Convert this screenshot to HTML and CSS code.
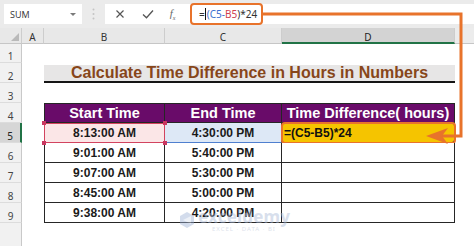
FILE: index.html
```html
<!DOCTYPE html>
<html>
<head>
<meta charset="utf-8">
<link rel="stylesheet" href="styles.css">
</head>
<body>
<div class="app">
  <div class="toolbar">
    <div class="namebox"><span>SUM</span><span class="caret"></span></div>
    <div class="grip">
      <svg width="3" height="12" viewBox="0 0 3 12"><circle cx="1.5" cy="1.5" r="1" fill="#c4c4c4"/><circle cx="1.5" cy="6" r="1" fill="#c4c4c4"/><circle cx="1.5" cy="10.5" r="1" fill="#c4c4c4"/></svg>
    </div>
    <div class="fbar">
      <span class="btn b1"><svg width="10" height="10" viewBox="0 0 10 10"><path d="M1.5 1.5 L8.5 8.5 M8.5 1.5 L1.5 8.5" stroke="#555" stroke-width="1.2" fill="none"/></svg></span>
      <span class="btn b2"><svg width="12" height="10" viewBox="0 0 12 10"><path d="M1 5.5 L4.5 8.8 L11 1.5" stroke="#555" stroke-width="1.3" fill="none"/></svg></span>
      <span class="btn b3"><span class="fx">f<sub>x</sub></span></span>
      <div class="formula"><span>=</span><span class="cursor"></span><span class="ref-blue">(C5-</span><span class="ref-red">B5</span><span>)*24</span></div>
    </div>
  </div>

  <div class="sheet">
    <div class="corner"><svg width="8" height="8" viewBox="0 0 8 8"><path d="M8 0 L8 8 L0 8 Z" fill="#b9b9b9"/></svg></div>
    <div class="colhead">A</div>
    <div class="colhead">B</div>
    <div class="colhead">C</div>
    <div class="colhead sel">D</div>
    <div class="colhead last"></div>

    <div class="rowhead">1</div><div class="blank span5"></div>

    <div class="rowhead">2</div><div class="blank"></div>
    <div class="title">Calculate Time Difference in Hours in Numbers</div>
    <div class="blank"></div>

    <div class="rowhead">3</div><div class="blank span5"></div>

    <div class="rowhead">4</div><div class="blank"></div>
    <div class="th first">Start Time</div>
    <div class="th">End Time</div>
    <div class="th">Time Difference( hours)</div>
    <div class="blank"></div>

    <div class="rowhead sel">5</div><div class="blank"></div>
    <div class="td first refb">8:13:00 AM<span class="h tl"></span><span class="h tr"></span><span class="h bl"></span><span class="h br"></span></div>
    <div class="td refc">4:30:00 PM</div>
    <div class="td active">=(C5-B5)*24</div>
    <div class="blank"></div>

    <div class="rowhead">6</div><div class="blank"></div>
    <div class="td first">9:01:00 AM</div><div class="td">5:40:00 PM</div><div class="td"></div><div class="blank"></div>

    <div class="rowhead">7</div><div class="blank"></div>
    <div class="td first">9:07:00 AM</div><div class="td">5:30:00 PM</div><div class="td"></div><div class="blank"></div>

    <div class="rowhead">8</div><div class="blank"></div>
    <div class="td first">8:45:00 AM</div><div class="td">5:00:00 PM</div><div class="td"></div><div class="blank"></div>

    <div class="rowhead">9</div><div class="blank"></div>
    <div class="td first">9:38:00 AM</div><div class="td">4:20:00 PM</div><div class="td"></div><div class="blank"></div>

    <div class="rowhead rest"></div><div class="blank span5"></div>
  </div>

  <div class="watermark">
    <svg class="wm-logo" width="18" height="18" viewBox="0 0 18 18"><path d="M9 1 L16 5 L16 13 L9 17 L2 13 L2 5 Z" fill="#9fb3d6"/><path d="M5 9 L13 5 L13 13 Z" fill="#ffffff" opacity="0.6"/></svg>
    <div class="wm-text">
      <div class="wm-name">exceldemy</div>
      <div class="wm-sub">EXCEL · DATA · BI</div>
    </div>
  </div>

  <svg class="connector" width="474" height="246" viewBox="0 0 474 246">
    <path d="M263 14 H461 V136 H442" stroke="#e8732b" stroke-width="3" fill="none"/>
    <path d="M426 136 L448 128 L442 136 L448 144 Z" fill="#e8732b"/>
  </svg>
</div>
</body>
</html>
```

FILE: styles.css
```css
html, body {
  margin: 0;
  padding: 0;
  background: #ffffff;
}

body {
  font-family: "Liberation Sans", Arial, sans-serif;
}

.app {
  position: relative;
  width: 474px;
  height: 246px;
  overflow: hidden;
  background: #ffffff;
}

/* ---------- toolbar ---------- */
.toolbar {
  display: flex;
  height: 28px;
  box-sizing: border-box;
  padding: 4px 0 4px 4px;
  background: #ebebeb;
}

.namebox {
  width: 78px;
  box-sizing: border-box;
  background: #ffffff;
  display: flex;
  align-items: center;
  justify-content: space-between;
  padding: 0 6px 0 6px;
  font-family: "Open Sans", "Noto Sans", sans-serif;
  font-size: 9px;
  color: #333333;
}

.caret {
  width: 0;
  height: 0;
  border-left: 3px solid transparent;
  border-right: 3px solid transparent;
  border-top: 3px solid #7a7a7a;
}

.grip {
  width: 23px;
  display: flex;
  align-items: center;
  justify-content: center;
}

.fbar {
  flex: 1;
  background: #ffffff;
  display: flex;
  align-items: center;
}

.btn {
  display: flex;
  align-items: center;
  justify-content: center;
  height: 20px;
}

.b1 { width: 30px; }
.b2 { width: 25px; }
.b3 { width: 25px; margin-right: 5px; }

.fx {
  font-family: "Liberation Serif", serif;
  font-style: italic;
  font-size: 11px;
  color: #666666;
}

.fx sub {
  font-size: 6px;
}

.formula {
  width: 73px;
  height: 22px;
  margin: -1px 0;
  box-sizing: border-box;
  border: 2.5px solid #e8732b;
  border-radius: 4px;
  display: flex;
  align-items: center;
  padding-left: 7px;
  font-family: "Noto Sans", sans-serif;
  font-size: 10px;
  color: #333333;
  white-space: nowrap;
}

.cursor {
  display: inline-block;
  width: 1px;
  height: 12px;
  background: #111111;
  margin: 0 0.5px;
}

.ref-blue { color: #3c6fd0; }
.ref-red { color: #d0404f; }

/* ---------- sheet ---------- */
.sheet {
  display: grid;
  grid-template-columns: 22px 22px 121px 117px 173px 1fr;
  grid-template-rows: 16px 19px repeat(8, 20px) 23px;
}

.corner {
  background: #e8e8e8;
  border-right: 1px solid #cdcdcd;
  border-bottom: 1px solid #c6c6c6;
  display: flex;
  align-items: flex-end;
  justify-content: flex-end;
  padding: 0 2px 2px 0;
  box-sizing: border-box;
}

.colhead {
  background: #e8e8e8;
  border-right: 1px solid #cdcdcd;
  border-bottom: 1px solid #c6c6c6;
  box-sizing: border-box;
  display: flex;
  align-items: center;
  justify-content: center;
  padding-top: 3px;
  font-family: "Noto Sans", sans-serif;
  font-size: 10px;
  color: #333333;
}

.colhead.sel {
  background: #d3d3d3;
  border-bottom: 2px solid #217346;
  color: #222222;
}

.colhead.last {
  border-right: none;
  background: #ececec;
}

.rowhead {
  background: #f1f1f1;
  border-right: 1px solid #c9c9c9;
  border-bottom: 1px solid #dcdcdc;
  box-sizing: border-box;
  display: flex;
  align-items: center;
  justify-content: center;
  padding-top: 6px;
  font-family: "Noto Sans", sans-serif;
  font-size: 10px;
  color: #444444;
}

.rowhead.sel {
  background: #d6d6d6;
  border-right: 2px solid #217346;
  color: #222222;
}

.rowhead.rest {
  border-bottom: none;
}

.span5 {
  grid-column: span 5;
}

.title {
  grid-column: span 3;
  margin-top: 2px;
  background: #e7e6e6;
  border-bottom: 2px solid #151515;
  box-sizing: border-box;
  display: flex;
  align-items: center;
  justify-content: center;
  font-size: 16px;
  font-weight: bold;
  color: #87461a;
  white-space: nowrap;
}

.th, .td {
  box-sizing: border-box;
  border-right: 1px solid #262626;
  border-bottom: 1px solid #262626;
  display: flex;
  align-items: center;
  justify-content: center;
  font-weight: bold;
  white-space: nowrap;
}

.first {
  border-left: 1px solid #262626;
}

.th {
  background: #690b69;
  border-top: 1px solid #262626;
  color: #ffffff;
  font-size: 14.5px;
}

.td {
  font-size: 12px;
  color: #1a1a1a;
  background: #ffffff;
}

.refb {
  position: relative;
  background: #fbe6e7;
  border: 1px solid #d2435f;
}

.h {
  position: absolute;
  width: 4px;
  height: 4px;
  background: #c93760;
}

.tl { left: -3px; top: -3px; }
.tr { right: -3px; top: -3px; }
.bl { left: -3px; bottom: -3px; }
.br { right: -3px; bottom: -3px; }

.refc {
  background: #dde8f6;
  border-bottom: 1px solid #4f7fcf;
}

.active {
  background: #f5c400;
  justify-content: flex-start;
  padding-left: 2px;
  outline: 2.5px solid #e8732b;
  outline-offset: -1px;
  border-radius: 3px;
  color: #111111;
}

/* ---------- overlays ---------- */
.watermark {
  position: absolute;
  left: 178px;
  top: 208px;
  display: flex;
  align-items: center;
  gap: 2px;
  opacity: 0.45;
  pointer-events: none;
}

.wm-text {
  display: flex;
  flex-direction: column;
  line-height: 1;
}

.wm-name {
  font-family: "Noto Sans", sans-serif;
  font-weight: bold;
  font-size: 17px;
  color: #a9b9d6;
  letter-spacing: 0.2px;
}

.wm-sub {
  font-family: "Noto Sans", sans-serif;
  font-size: 6px;
  color: #b5c0d4;
  letter-spacing: 1px;
  margin-top: 1px;
  padding-left: 14px;
}

.connector {
  position: absolute;
  left: 0;
  top: 0;
  pointer-events: none;
}
```
